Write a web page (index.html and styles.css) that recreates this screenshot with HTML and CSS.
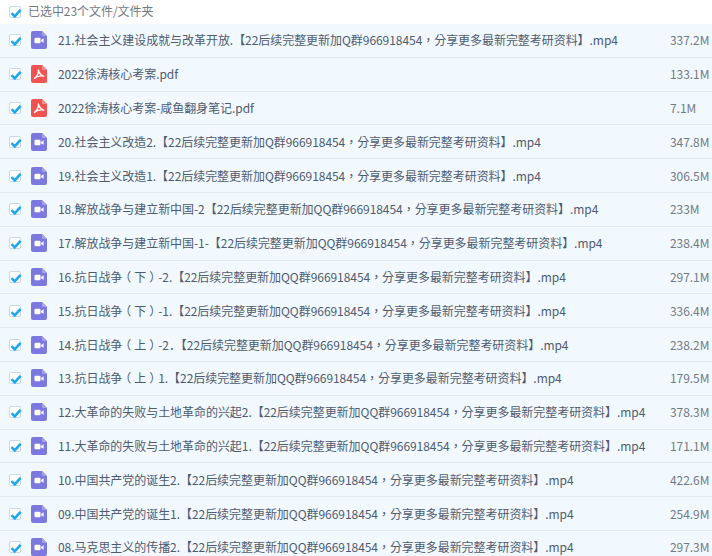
FILE: index.html
```html
<!DOCTYPE html>
<html>
<head>
  <title>文件列表</title>
  <link rel="stylesheet" href="styles.css">
</head>
<body>
  <svg class="defs" width="0" height="0">
    <symbol id="check" viewBox="0 0 12 12">
      <path d="M1.5 6.2 L4.7 9.4 L10.6 2.8" fill="none" stroke="#1ea7ee" stroke-width="2.6"/>
    </symbol>
    <symbol id="video" viewBox="0 0 16 18">
      <path d="M2 0H11L16 5V16a2 2 0 0 1-2 2H2a2 2 0 0 1-2-2V2a2 2 0 0 1 2-2Z" fill="#7b79e0"/>
      <path d="M11 0L16 5H12a1 1 0 0 1-1-1Z" fill="#a3a1ec"/>
      <rect x="3.5" y="6.8" width="6" height="5.5" rx="1" fill="#fff"/>
      <path d="M10 8.9L12.6 7.3V11.8L10 10.2Z" fill="#fff"/>
    </symbol>
    <symbol id="pdf" viewBox="0 0 16 18">
      <path d="M2 0H11L16 5V16a2 2 0 0 1-2 2H2a2 2 0 0 1-2-2V2a2 2 0 0 1 2-2Z" fill="#f25350"/>
      <path d="M11 0L16 5H12a1 1 0 0 1-1-1Z" fill="#f78b88"/>
      <path d="M7.4 5C7.6 8 6 11.4 3.4 13.4C6 11.4 10 10.6 12.8 11.2C10.4 10.6 8.2 8 7.4 5Z" fill="none" stroke="#fff" stroke-width="1.3" stroke-linejoin="round"/>
    </symbol>
  </svg>

  <div class="list-head">
    <span class="checkbox"><svg><use href="#check"/></svg></span>
    <span class="head-text">已选中23个文件/文件夹</span>
  </div>

  <div class="file-list">
    <div class="file-row">
      <span class="checkbox"><svg><use href="#check"/></svg></span>
      <svg class="file-icon"><use href="#video"/></svg>
      <span class="file-name">21.社会主义建设成就与改革开放.【22后续完整更新加Q群966918454，分享更多最新完整考研资料】.mp4</span>
      <span class="file-size">337.2M</span>
    </div>
    <div class="file-row">
      <span class="checkbox"><svg><use href="#check"/></svg></span>
      <svg class="file-icon"><use href="#pdf"/></svg>
      <span class="file-name">2022徐涛核心考案.pdf</span>
      <span class="file-size">133.1M</span>
    </div>
    <div class="file-row">
      <span class="checkbox"><svg><use href="#check"/></svg></span>
      <svg class="file-icon"><use href="#pdf"/></svg>
      <span class="file-name">2022徐涛核心考案-咸鱼翻身笔记.pdf</span>
      <span class="file-size">7.1M</span>
    </div>
    <div class="file-row">
      <span class="checkbox"><svg><use href="#check"/></svg></span>
      <svg class="file-icon"><use href="#video"/></svg>
      <span class="file-name">20.社会主义改造2.【22后续完整更新加Q群966918454，分享更多最新完整考研资料】.mp4</span>
      <span class="file-size">347.8M</span>
    </div>
    <div class="file-row">
      <span class="checkbox"><svg><use href="#check"/></svg></span>
      <svg class="file-icon"><use href="#video"/></svg>
      <span class="file-name">19.社会主义改造1.【22后续完整更新加Q群966918454，分享更多最新完整考研资料】.mp4</span>
      <span class="file-size">306.5M</span>
    </div>
    <div class="file-row">
      <span class="checkbox"><svg><use href="#check"/></svg></span>
      <svg class="file-icon"><use href="#video"/></svg>
      <span class="file-name">18.解放战争与建立新中国-2【22后续完整更新加QQ群966918454，分享更多最新完整考研资料】.mp4</span>
      <span class="file-size">233M</span>
    </div>
    <div class="file-row">
      <span class="checkbox"><svg><use href="#check"/></svg></span>
      <svg class="file-icon"><use href="#video"/></svg>
      <span class="file-name">17.解放战争与建立新中国-1-【22后续完整更新加QQ群966918454，分享更多最新完整考研资料】.mp4</span>
      <span class="file-size">238.4M</span>
    </div>
    <div class="file-row">
      <span class="checkbox"><svg><use href="#check"/></svg></span>
      <svg class="file-icon"><use href="#video"/></svg>
      <span class="file-name">16.抗日战争<span class="paren">（</span>下<span class="paren">）</span>-2.【22后续完整更新加QQ群966918454，分享更多最新完整考研资料】.mp4</span>
      <span class="file-size">297.1M</span>
    </div>
    <div class="file-row">
      <span class="checkbox"><svg><use href="#check"/></svg></span>
      <svg class="file-icon"><use href="#video"/></svg>
      <span class="file-name">15.抗日战争<span class="paren">（</span>下<span class="paren">）</span>-1.【22后续完整更新加QQ群966918454，分享更多最新完整考研资料】.mp4</span>
      <span class="file-size">336.4M</span>
    </div>
    <div class="file-row">
      <span class="checkbox"><svg><use href="#check"/></svg></span>
      <svg class="file-icon"><use href="#video"/></svg>
      <span class="file-name">14.抗日战争<span class="paren">（</span>上<span class="paren">）</span>-2<span class="wide-dot">．</span>【22后续完整更新加QQ群966918454，分享更多最新完整考研资料】.mp4</span>
      <span class="file-size">238.2M</span>
    </div>
    <div class="file-row">
      <span class="checkbox"><svg><use href="#check"/></svg></span>
      <svg class="file-icon"><use href="#video"/></svg>
      <span class="file-name">13.抗日战争<span class="paren">（</span>上<span class="paren">）</span>1.【22后续完整更新加QQ群966918454，分享更多最新完整考研资料】.mp4</span>
      <span class="file-size">179.5M</span>
    </div>
    <div class="file-row">
      <span class="checkbox"><svg><use href="#check"/></svg></span>
      <svg class="file-icon"><use href="#video"/></svg>
      <span class="file-name">12.大革命的失败与土地革命的兴起2.【22后续完整更新加QQ群966918454，分享更多最新完整考研资料】.mp4</span>
      <span class="file-size">378.3M</span>
    </div>
    <div class="file-row">
      <span class="checkbox"><svg><use href="#check"/></svg></span>
      <svg class="file-icon"><use href="#video"/></svg>
      <span class="file-name">11.大革命的失败与土地革命的兴起1.【22后续完整更新加QQ群966918454，分享更多最新完整考研资料】.mp4</span>
      <span class="file-size">171.1M</span>
    </div>
    <div class="file-row">
      <span class="checkbox"><svg><use href="#check"/></svg></span>
      <svg class="file-icon"><use href="#video"/></svg>
      <span class="file-name">10.中国共产党的诞生2.【22后续完整更新加QQ群966918454，分享更多最新完整考研资料】.mp4</span>
      <span class="file-size">422.6M</span>
    </div>
    <div class="file-row">
      <span class="checkbox"><svg><use href="#check"/></svg></span>
      <svg class="file-icon"><use href="#video"/></svg>
      <span class="file-name">09.中国共产党的诞生1.【22后续完整更新加QQ群966918454，分享更多最新完整考研资料】.mp4</span>
      <span class="file-size">254.9M</span>
    </div>
    <div class="file-row">
      <span class="checkbox"><svg><use href="#check"/></svg></span>
      <svg class="file-icon"><use href="#video"/></svg>
      <span class="file-name">08.马克思主义的传播2.【22后续完整更新加QQ群966918454，分享更多最新完整考研资料】.mp4</span>
      <span class="file-size">297.3M</span>
    </div>
  </div>
</body>
</html>
```

FILE: styles.css
```css
html, body {
  height: 100%;
}

body {
  margin: 0;
  overflow: hidden;
  background-color: #ffffff;
  color: #4f5b70;
  font-family: "Noto Sans CJK TC", "Noto Sans", sans-serif;
  font-size: 12px;
  letter-spacing: -0.05px;
}

.defs {
  position: absolute;
}

.list-head {
  display: flex;
  align-items: center;
  height: 24px;
  padding-left: 9px;
  padding-bottom: 1px;
  box-sizing: border-box;
}

.head-text {
  margin-left: 7px;
  padding-bottom: 2px;
  color: #737a85;
}

.checkbox {
  display: block;
  flex: none;
  width: 10px;
  height: 10px;
  position: relative;
  border: 1px solid #c9d9e8;
  border-radius: 2px;
  background-color: #ffffff;
}

.checkbox svg {
  position: absolute;
  left: 0;
  top: 0;
  width: 12px;
  height: 12px;
}

.file-row {
  display: flex;
  align-items: center;
  height: 33.8px;
  box-sizing: border-box;
  padding-left: 9px;
  background-color: #f2f9fe;
  border-bottom: 1px solid #dfeaf3;
}

.file-icon {
  flex: none;
  width: 16px;
  height: 18px;
  margin-left: 10px;
}

.file-name {
  flex: 1;
  margin-left: 11px;
  padding-bottom: 1px;
  white-space: nowrap;
  overflow: hidden;
}

.paren {
  padding: 0 3px;
  font-feature-settings: "halt";
}

.wide-dot {
  font-family: "Noto Sans CJK SC", sans-serif;
}

.file-size {
  flex: none;
  width: 42px;
  padding-bottom: 1px;
  color: #737a85;
}
```
